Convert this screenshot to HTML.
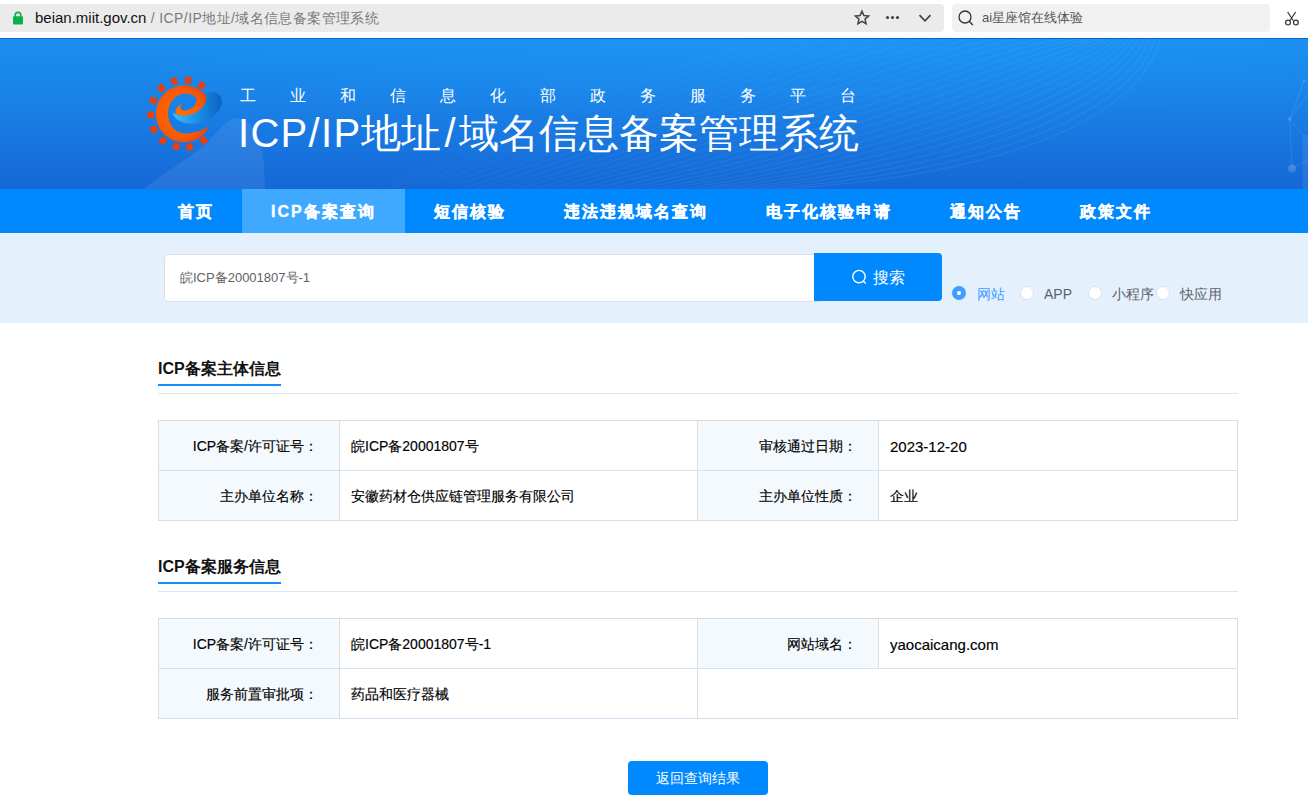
<!DOCTYPE html>
<html><head><meta charset="utf-8">
<style>
*{margin:0;padding:0;box-sizing:border-box}
html,body{width:1308px;height:805px;overflow:hidden;background:#fff;font-family:"Liberation Sans",sans-serif;}
.a{position:absolute;white-space:nowrap}
#url{left:0;top:4px;width:944px;height:28px;background:#ebebeb;border-radius:0 4px 4px 0}
#srch{left:952px;top:4px;width:318px;height:28px;background:#f1f1f1;border-radius:4px}
#header{left:0;top:38px;width:1308px;height:151px;background:linear-gradient(180deg,#1a8ff0 0%,#1a80e6 45%,#1568d6 100%);overflow:hidden;border-top:1px solid #0d62cf}
#nav{left:0;top:189px;width:1308px;height:44px;background:#0088ff}
.ni{top:1px;height:44px;line-height:44px;font-size:16px;font-weight:bold;color:#fff;letter-spacing:2px;-webkit-text-stroke:0.35px #fff}
#band{left:0;top:233px;width:1308px;height:90px;background:#e4f1fd}
.sub{top:86px;font-size:16px;color:#fff;line-height:20px}
.tt{font-size:40px;color:#fff;line-height:48px;top:109px;left:238px}
.sec{font-size:16px;font-weight:bold;color:#111;line-height:22px}
.uline{height:2px;background:#1a8cff}
.hr{height:1px;background:#d8e7f5}
table{position:absolute;border-collapse:collapse;table-layout:fixed;font-size:14px;color:#000;-webkit-text-stroke:0.15px #000}
td{border:1px solid #dcdcdc;border-top-color:#d0e3f4;border-bottom-color:#d0e3f4;height:50px;padding:0}
tr:first-child td{border-top-color:#dcdcdc}
tr:last-child td{border-bottom-color:#dcdcdc}
td.l{background:#f4f9fd;text-align:right;padding-right:21px;padding-top:2px}
td.v{padding-left:11px;padding-top:2px}
</style></head><body>
<!-- browser chrome -->
<div class="a" id="url"></div>
<div class="a" id="srch"></div>
<svg class="a" style="left:12px;top:11px" width="12" height="14" viewBox="0 0 12 14">
  <path d="M3.2 6V4.2a2.8 2.8 0 0 1 5.6 0V6" fill="none" stroke="#0bb24c" stroke-width="1.6"/>
  <rect x="1" y="5.2" width="10" height="8.3" rx="1" fill="#0bb24c"/>
</svg>
<div class="a" style="left:35px;top:9px;font-size:15px;line-height:18px;color:#111">beian.miit.gov.cn<span style="color:#7a7a7a;font-size:14px;letter-spacing:0.4px"> / ICP/IP地址/域名信息备案管理系统</span></div>
<svg class="a" style="left:853px;top:9px" width="18" height="18" viewBox="0 0 18 18">
  <path d="M9 2.2l1.9 4.4 4.7.4-3.6 3.1 1.1 4.6L9 12.3l-4.1 2.4L6 10.1 2.4 7l4.7-.4z" fill="none" stroke="#444" stroke-width="1.5" stroke-linejoin="miter"/>
</svg>
<svg class="a" style="left:884px;top:14px" width="16" height="7" viewBox="0 0 16 7">
  <circle cx="3.5" cy="3.5" r="1.6" fill="#444"/><circle cx="8.5" cy="3.5" r="1.6" fill="#444"/><circle cx="13.5" cy="3.5" r="1.6" fill="#444"/>
</svg>
<svg class="a" style="left:917px;top:12px" width="16" height="12" viewBox="0 0 16 12">
  <path d="M2.5 3.2L8 8.8l5.5-5.6" fill="none" stroke="#444" stroke-width="1.7"/>
</svg>
<svg class="a" style="left:956px;top:9px" width="20" height="18" viewBox="0 0 20 18">
  <circle cx="9" cy="8" r="6" fill="none" stroke="#333" stroke-width="1.3"/>
  <path d="M13.2 12.3l3.6 3.6" stroke="#333" stroke-width="1.4"/>
</svg>
<div class="a" style="left:982px;top:9px;font-size:13px;line-height:18px;color:#555">ai星座馆在线体验</div>
<svg class="a" style="left:1283px;top:9px" width="18" height="18" viewBox="0 0 18 18">
  <path d="M4.6 3l5.6 8.5M12.6 3L7 11.5" stroke="#333" stroke-width="1.2" fill="none"/>
  <circle cx="5" cy="13.6" r="2.4" fill="none" stroke="#333" stroke-width="1.2"/>
  <circle cx="12.9" cy="13.6" r="2.4" fill="none" stroke="#333" stroke-width="1.2"/>
</svg>

<!-- header -->
<div class="a" id="header">
<svg width="1308" height="151" viewBox="0 0 1308 151" style="position:absolute;left:0;top:0">
<defs>
<radialGradient id="hl" cx="0.62" cy="0" r="0.55"><stop offset="0" stop-color="#22a0ff" stop-opacity="0.35"/><stop offset="1" stop-color="#22a0ff" stop-opacity="0"/></radialGradient>
</defs>
<rect width="1308" height="151" fill="url(#hl)"/>
<path d="M142,151 C170,130 195,115 208,103 C220,90 228,79 236,79 C252,79 262,100 264,125 L265,151Z" fill="rgba(255,255,255,0.08)"/>
<path d="M1160,0 C1140,80 1000,140 760,151.0" stroke="rgba(255,255,255,0.100)" stroke-width="0.8" fill="none"/>
<path d="M1155,0 C1133,73 989,136 746,151.0" stroke="rgba(255,255,255,0.098)" stroke-width="0.8" fill="none"/>
<path d="M1149,0 C1126,67 978,131 731,151.0" stroke="rgba(255,255,255,0.096)" stroke-width="0.8" fill="none"/>
<path d="M1144,0 C1118,60 968,127 717,151.0" stroke="rgba(255,255,255,0.093)" stroke-width="0.8" fill="none"/>
<path d="M1138,0 C1111,54 957,122 702,151.0" stroke="rgba(255,255,255,0.091)" stroke-width="0.8" fill="none"/>
<path d="M1133,0 C1104,47 946,118 688,151.0" stroke="rgba(255,255,255,0.089)" stroke-width="0.8" fill="none"/>
<path d="M1128,0 C1097,40 935,114 674,151.0" stroke="rgba(255,255,255,0.087)" stroke-width="0.8" fill="none"/>
<path d="M1122,0 C1090,34 924,109 659,151.0" stroke="rgba(255,255,255,0.084)" stroke-width="0.8" fill="none"/>
<path d="M1117,0 C1082,27 914,105 645,151.0" stroke="rgba(255,255,255,0.082)" stroke-width="0.8" fill="none"/>
<path d="M1111,0 C1075,21 903,100 630,151.0" stroke="rgba(255,255,255,0.080)" stroke-width="0.8" fill="none"/>
<path d="M1106,0 C1068,14 892,96 616,151.0" stroke="rgba(255,255,255,0.078)" stroke-width="0.8" fill="none"/>
<path d="M1101,0 C1061,7 881,92 602,151.0" stroke="rgba(255,255,255,0.076)" stroke-width="0.8" fill="none"/>
<path d="M1095,0 C1054,1 870,87 587,151.0" stroke="rgba(255,255,255,0.073)" stroke-width="0.8" fill="none"/>
<path d="M1090,0 C1046,-6 860,83 573,151.0" stroke="rgba(255,255,255,0.071)" stroke-width="0.8" fill="none"/>
<path d="M1084,0 C1039,-12 849,78 558,151.0" stroke="rgba(255,255,255,0.069)" stroke-width="0.8" fill="none"/>
<path d="M1079,0 C1032,-19 838,74 544,151.0" stroke="rgba(255,255,255,0.067)" stroke-width="0.8" fill="none"/>
<path d="M1074,0 C1025,-26 827,70 530,151.0" stroke="rgba(255,255,255,0.064)" stroke-width="0.8" fill="none"/>
<path d="M1068,0 C1018,-32 816,65 515,151.0" stroke="rgba(255,255,255,0.062)" stroke-width="0.8" fill="none"/>
<path d="M1063,0 C1010,-39 806,61 501,151.0" stroke="rgba(255,255,255,0.060)" stroke-width="0.8" fill="none"/>
<path d="M1057,0 C1003,-45 795,56 486,151.0" stroke="rgba(255,255,255,0.058)" stroke-width="0.8" fill="none"/>
<path d="M1052,0 C996,-52 784,52 472,151.0" stroke="rgba(255,255,255,0.056)" stroke-width="0.8" fill="none"/>
<path d="M1047,0 C989,-59 773,48 458,151.0" stroke="rgba(255,255,255,0.053)" stroke-width="0.8" fill="none"/>
<path d="M1041,0 C982,-65 762,43 443,151.0" stroke="rgba(255,255,255,0.051)" stroke-width="0.8" fill="none"/>
<path d="M1036,0 C974,-72 752,39 429,151.0" stroke="rgba(255,255,255,0.049)" stroke-width="0.8" fill="none"/>
<path d="M1030,0 C967,-78 741,34 414,151.0" stroke="rgba(255,255,255,0.047)" stroke-width="0.8" fill="none"/>
<path d="M1025,0 C960,-85 730,30 400,151.0" stroke="rgba(255,255,255,0.044)" stroke-width="0.8" fill="none"/>
<path d="M1020,0 C953,-92 719,26 386,151.0" stroke="rgba(255,255,255,0.042)" stroke-width="0.8" fill="none"/>
<path d="M1014,0 C946,-98 708,21 371,151.0" stroke="rgba(255,255,255,0.040)" stroke-width="0.8" fill="none"/>
<g fill="none" stroke="rgba(255,255,255,0.13)" stroke-width="0.8">
<path d="M1304,41.6 L1289.7,80.3 L1292,129.5 L1308,121"/>
<path d="M1289.7,80.3 L1308,55"/>
<path d="M1289.7,80.3 L1305,98"/>
</g>
<g fill="rgba(255,255,255,0.16)"><circle cx="1304" cy="41.6" r="1.4"/><circle cx="1289.7" cy="80.3" r="1.8"/><circle cx="1292" cy="129.5" r="4"/></g>
<rect x="1302.5" y="96" width="8" height="60" rx="3" fill="rgba(255,255,255,0.07)"/>
</svg>
</div>
<svg class="a" style="left:140px;top:70px" width="90" height="85" viewBox="0 0 90 85">
<defs>
<linearGradient id="bl" x1="0" y1="0" x2="1" y2="0"><stop offset="0" stop-color="#3cc0fa"/><stop offset="0.5" stop-color="#1a8ee6"/><stop offset="1" stop-color="#0a64c0"/></linearGradient>
<radialGradient id="og" cx="0.45" cy="0.5" r="0.6"><stop offset="0" stop-color="#ff7000"/><stop offset="0.7" stop-color="#f85a06"/><stop offset="1" stop-color="#e8460c"/></radialGradient>
</defs>
<path d="M32.5,42.5 C36,55 56,57 69,49 C79,43 84,34 81,27 C78,21.5 71,21 64,23 L60,37 C52,44 40,47 32.5,42.5Z" fill="url(#bl)"/>
<g fill="#ea3f0c">
<path transform="translate(34.3,11.6) rotate(-17.6)" d="M-3.5,-3.8 L3.5,-3.8 L2.9,3 L-2.9,3Z"/>
<path transform="translate(48.1,10.6) rotate(6.2)" d="M-3.5,-3.8 L3.5,-3.8 L2.9,3 L-2.9,3Z"/>
<path transform="translate(61.3,15.8) rotate(31.0)" d="M-3.5,-3.8 L3.5,-3.8 L2.9,3 L-2.9,3Z"/>
<path transform="translate(21.7,18.5) rotate(-42.0)" d="M-3.5,-3.8 L3.5,-3.8 L2.9,3 L-2.9,3Z"/>
<path transform="translate(13.7,30.6) rotate(-66.8)" d="M-3.5,-3.8 L3.5,-3.8 L2.9,3 L-2.9,3Z"/>
<path transform="translate(11.1,44.9) rotate(268.1)" d="M-3.5,-3.8 L3.5,-3.8 L2.9,3 L-2.9,3Z"/>
<path transform="translate(14.3,59.2) rotate(243.0)" d="M-3.5,-3.8 L3.5,-3.8 L2.9,3 L-2.9,3Z"/>
<path transform="translate(23.2,70.2) rotate(218.9)" d="M-3.5,-3.8 L3.5,-3.8 L2.9,3 L-2.9,3Z"/>
<path transform="translate(36.4,76) rotate(194.1)" d="M-3.5,-3.8 L3.5,-3.8 L2.9,3 L-2.9,3Z"/>
<path transform="translate(49.6,76.6) rotate(171.2)" d="M-3.5,-3.8 L3.5,-3.8 L2.9,3 L-2.9,3Z"/>
<path transform="translate(63.4,70.2) rotate(144.4)" d="M-3.5,-3.8 L3.5,-3.8 L2.9,3 L-2.9,3Z"/>
</g>
<path d="M68.7,56.5 C67.5,60 65,63.5 62.6,65.7 A28.5,28.5 0 1 1 66.1,25.5 C67,30 65,36 59,40.5 C53,45 42,47.5 36.5,44 C34,42 36,37 41.5,33.5 C39.5,37 40,40.5 45,40.5 C51,40 57,35 56.5,29.5 C56,25 50,23.5 45,23.8 A16.8,19.8 0 0 0 44.5,63.4 C54,63.4 62,60.5 68.7,56.5Z" fill="url(#og)"/>
</svg>
<div class="a sub" style="left:240px">工</div>
<div class="a sub" style="left:290px">业</div>
<div class="a sub" style="left:340px">和</div>
<div class="a sub" style="left:390px">信</div>
<div class="a sub" style="left:440px">息</div>
<div class="a sub" style="left:490px">化</div>
<div class="a sub" style="left:540px">部</div>
<div class="a sub" style="left:590px">政</div>
<div class="a sub" style="left:640px">务</div>
<div class="a sub" style="left:690px">服</div>
<div class="a sub" style="left:740px">务</div>
<div class="a sub" style="left:790px">平</div>
<div class="a sub" style="left:840px">台</div>
<div class="a tt"><span style="letter-spacing:1.3px">ICP/IP</span>地址<span style="padding:0 3px">/</span>域名信息备案管理系统</div>

<!-- nav -->
<div class="a" id="nav">
  <div class="a" style="left:242px;top:0;width:163px;height:44px;background:#3ea9ff"></div>
  <div class="a ni" style="left:178px">首页</div>
  <div class="a ni" style="left:271px">ICP备案查询</div>
  <div class="a ni" style="left:434px">短信核验</div>
  <div class="a ni" style="left:564px">违法违规域名查询</div>
  <div class="a ni" style="left:766px">电子化核验申请</div>
  <div class="a ni" style="left:950px">通知公告</div>
  <div class="a ni" style="left:1080px">政策文件</div>
</div>

<!-- search band -->
<div class="a" id="band"></div>
<div class="a" style="left:164px;top:254px;width:660px;height:48px;background:#fff;border:1px solid #dcdfe6;border-radius:4px"></div>
<div class="a" style="left:180px;top:269px;font-size:13px;line-height:18px;color:#606266">皖ICP备20001807号-1</div>
<div class="a" style="left:814px;top:253px;width:128px;height:48px;background:#0088ff;border-radius:0 4px 4px 0"></div>
<svg class="a" style="left:850px;top:268px" width="20" height="20" viewBox="0 0 20 20">
  <circle cx="9" cy="8.6" r="6.2" fill="none" stroke="#fff" stroke-width="1.4"/>
  <path d="M13.4 13.2l2.4 2.4" stroke="#fff" stroke-width="1.4"/>
</svg>
<div class="a" style="left:873px;top:267px;font-size:16px;line-height:22px;color:#fff">搜索</div>

<div class="a" style="left:952px;top:286px;width:14px;height:14px;border-radius:50%;background:#409eff"></div>
<div class="a" style="left:957px;top:291px;width:4px;height:4px;border-radius:50%;background:#fff"></div>
<div class="a" style="left:977px;top:285px;font-size:14px;line-height:18px;color:#409eff">网站</div>
<div class="a" style="left:1020px;top:286px;width:14px;height:14px;border-radius:50%;background:#fff;border:1px solid #dcdfe6"></div>
<div class="a" style="left:1044px;top:285px;font-size:14px;line-height:18px;color:#606266">APP</div>
<div class="a" style="left:1088px;top:286px;width:14px;height:14px;border-radius:50%;background:#fff;border:1px solid #dcdfe6"></div>
<div class="a" style="left:1112px;top:285px;font-size:14px;line-height:18px;color:#606266">小程序</div>
<div class="a" style="left:1156px;top:286px;width:14px;height:14px;border-radius:50%;background:#fff;border:1px solid #dcdfe6"></div>
<div class="a" style="left:1180px;top:285px;font-size:14px;line-height:18px;color:#606266">快应用</div>

<!-- section 1 -->
<div class="a sec" style="left:158px;top:358px">ICP备案主体信息</div>
<div class="a uline" style="left:158px;top:384px;width:123px"></div>
<div class="a hr" style="left:158px;top:393px;width:1080px"></div>
<table style="left:158px;top:420px;width:1079px">
<colgroup><col style="width:181px"><col style="width:358px"><col style="width:181px"><col style="width:359px"></colgroup>
<tr><td class="l">ICP备案/许可证号：</td><td class="v">皖ICP备20001807号</td><td class="l">审核通过日期：</td><td class="v" style="font-size:15px">2023-12-20</td></tr>
<tr><td class="l">主办单位名称：</td><td class="v">安徽药材仓供应链管理服务有限公司</td><td class="l">主办单位性质：</td><td class="v">企业</td></tr>
</table>

<!-- section 2 -->
<div class="a sec" style="left:158px;top:556px">ICP备案服务信息</div>
<div class="a uline" style="left:158px;top:582px;width:123px"></div>
<div class="a hr" style="left:158px;top:591px;width:1080px"></div>
<table style="left:158px;top:618px;width:1079px">
<colgroup><col style="width:181px"><col style="width:358px"><col style="width:181px"><col style="width:359px"></colgroup>
<tr><td class="l">ICP备案/许可证号：</td><td class="v">皖ICP备20001807号-1</td><td class="l">网站域名：</td><td class="v" style="font-size:15px">yaocaicang.com</td></tr>
<tr><td class="l" style="border-bottom-color:#cfe1f3">服务前置审批项：</td><td class="v" style="border-bottom-color:#cfe1f3">药品和医疗器械</td><td class="v" colspan="2"></td></tr>
</table>

<div class="a" style="left:628px;top:761px;width:140px;height:34px;background:#0088ff;border-radius:4px;color:#fff;font-size:14px;line-height:34px;text-align:center">返回查询结果</div>
</body></html>
